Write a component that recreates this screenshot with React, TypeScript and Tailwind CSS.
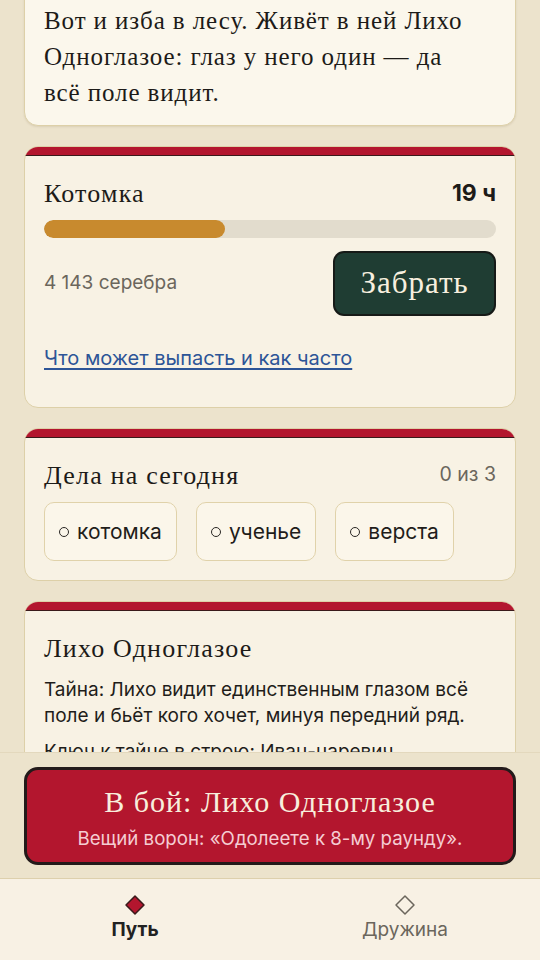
import React from "react";

const serif = { fontFamily: '"Liberation Serif", "DejaVu Serif", serif' };
const sans = { fontFamily: 'Inter, "Noto Sans", sans-serif' };

function Band() {
  return <div className="h-[9px] bg-[#b3162e] border-b border-[#3a1a1a]" />;
}

function Chip({ label }: { label: string }) {
  return (
    <div className="h-[59px] px-[14px] flex items-center gap-[8px] rounded-[10px] border border-[#e0d2aa] bg-[#fbf6ea] text-[21px] text-[#1f1d1a]">
      <span className="w-[10px] h-[10px] rounded-full border-[1.5px] border-[#2a2724]" />
      <span>{label}</span>
    </div>
  );
}

export default function App() {
  return (
    <div className="w-[540px] h-[960px] flex flex-col bg-[#ece3cc] overflow-hidden" style={sans}>
      <div className="flex-1 overflow-hidden relative">
        <div className="-mt-[18px] px-[24px] flex flex-col gap-[20px]">
          <div className="rounded-[14px] border border-[#ddd0a8] bg-[#fbf7ec] pl-[19px] pr-[40px] pt-[20px] pb-[14px] shadow-[0_1px_2px_rgba(120,100,60,0.15)]">
            <p className="text-[25px] leading-[36px] tracking-[0.9px] text-[#1d1b18]" style={serif}>
              Вот и изба в лесу. Живёт в ней Лихо Одноглазое: глаз у него один — да всё поле видит.
            </p>
          </div>

          <div className="rounded-[14px] border border-[#ddd0a8] bg-[#f8f2e4] overflow-hidden">
            <Band />
            <div className="px-[19px] pt-[19px] pb-[35px]">
              <div className="flex items-center justify-between h-[36px]">
                <span className="text-[26px] tracking-[1.2px] text-[#1d1b18]" style={serif}>Котомка</span>
                <span className="text-[23px] font-bold text-[#1d1b18]">19 ч</span>
              </div>
              <div className="mt-[9px] h-[18px] rounded-full bg-[#e2dccd] overflow-hidden">
                <div className="h-full rounded-full bg-[#c88a2e]" style={{ width: "40%" }} />
              </div>
              <div className="mt-[13px] flex items-center justify-between">
                <span className="text-[19px] text-[#6b665c]">4 143 серебра</span>
                <button className="w-[163px] h-[65px] rounded-[11px] bg-[#1f3d33] border-2 border-[#161a17] text-[#f7efdf] text-[31px] tracking-[1px]" style={serif}>
                  Забрать
                </button>
              </div>
              <div className="mt-[29px] leading-[26px]">
                <a className="text-[20px] text-[#2d5597] underline underline-offset-[3px] decoration-[1.5px]">Что может выпасть и как часто</a>
              </div>
            </div>
          </div>

          <div className="rounded-[14px] border border-[#ddd0a8] bg-[#f8f2e4] overflow-hidden">
            <Band />
            <div className="px-[19px] pt-[19px] pb-[19px]">
              <div className="flex items-center justify-between h-[36px]">
                <span className="text-[26px] tracking-[1.2px] text-[#1d1b18]" style={serif}>Дела на сегодня</span>
                <span className="text-[19.5px] text-[#6b665c]">0 из 3</span>
              </div>
              <div className="mt-[9px] flex gap-[19px]">
                <Chip label="котомка" />
                <Chip label="ученье" />
                <Chip label="верста" />
              </div>
            </div>
          </div>

          <div className="rounded-[14px] border border-[#ddd0a8] bg-[#f8f2e4] overflow-hidden">
            <Band />
            <div className="px-[19px] pt-[19px] pb-[20px]">
              <div className="h-[36px] flex items-center">
                <span className="text-[26px] tracking-[1.2px] text-[#1d1b18]" style={serif}>Лихо Одноглазое</span>
              </div>
              <p className="mt-[11px] text-[19px] leading-[26px] text-[#1f1d1a]">
                Тайна: Лихо видит единственным глазом всё поле и бьёт кого хочет, минуя передний ряд.
              </p>
              <p className="mt-[10px] text-[19px] leading-[26px] text-[#1f1d1a]">
                Ключ к тайне в строю: Иван-царевич.
              </p>
            </div>
          </div>
        </div>
      </div>

      <div className="h-[126px] shrink-0 bg-[#ece3cc] px-[24px] pt-[14px] pb-[14px] border-t border-[#e3d8bd]">
        <button className="w-full h-[98px] rounded-[14px] bg-[#b3162e] border-[3px] border-[#231a1a] flex flex-col items-center justify-start pt-[14px]">
          <span className="text-[30px] leading-[36px] tracking-[1px] text-[#f8eedd]" style={serif}>В бой: Лихо Одноглазое</span>
          <span className="mt-[7px] text-[18.7px] leading-[24px] text-[#f5cdd3]">Вещий ворон: «Одолеете к 8-му раунду».</span>
        </button>
      </div>

      <nav className="h-[82px] shrink-0 bg-[#f8f1e4] border-t border-[#ddd0ad] flex">
        <div className="flex-1 flex flex-col items-center pt-[15px]">
          <svg width="22" height="22" viewBox="0 0 22 22">
            <path d="M11 2 L20 11 L11 20 L2 11 Z" fill="#b3162e" stroke="#3a1a1a" strokeWidth="1.5" strokeLinejoin="round" />
          </svg>
          <span className="mt-[2px] text-[19px] leading-[24px] font-bold text-[#222]">Путь</span>
        </div>
        <div className="flex-1 flex flex-col items-center pt-[15px]">
          <svg width="22" height="22" viewBox="0 0 22 22">
            <path d="M11 2 L20 11 L11 20 L2 11 Z" fill="none" stroke="#6b665c" strokeWidth="1.5" strokeLinejoin="round" />
          </svg>
          <span className="mt-[2px] text-[19px] leading-[24px] text-[#6b665c]">Дружина</span>
        </div>
      </nav>
    </div>
  );
}
